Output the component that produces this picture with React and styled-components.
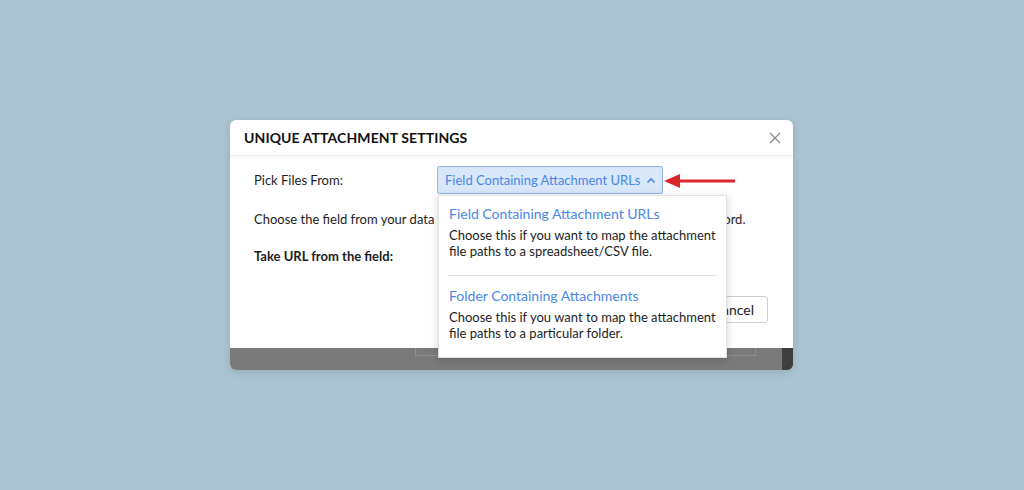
import styled, { createGlobalStyle } from "styled-components";

const Global = createGlobalStyle`
  html, body { margin: 0; padding: 0; }
  body {
    background: #a9c4d0;
    font-family: Lato, "Open Sans", sans-serif;
    color: #1d1d1d;
  }
`;

export default function App() {
  return (
    <>
      <Global />
      <Page>
        <Dialog>
          <Header>
            <Title>UNIQUE ATTACHMENT SETTINGS</Title>
            <Close>
              <svg width="12" height="12" viewBox="0 0 12 12">
                <path d="M1 1L11 11M11 1L1 11" stroke="#8a8a8a" strokeWidth="1.3" />
              </svg>
            </Close>
          </Header>
          <Body>
            <Row>
              <Label>Pick Files From:</Label>
              <SelectWrap>
                <Select>
                  Field Containing Attachment URLs
                  <svg width="10" height="7" viewBox="0 0 10 7">
                    <path d="M1.5 5.5L5 2L8.5 5.5" fill="none" stroke="#4a86e8" strokeWidth="1.6" />
                  </svg>
                </Select>
                <Arrow>
                  <svg width="72" height="16" viewBox="0 0 72 16">
                    <path d="M0 8L16 1V15Z" fill="#d8262c" />
                    <path d="M14 8H71" stroke="#d8262c" strokeWidth="3" />
                  </svg>
                </Arrow>
                <Menu>
                  <Option>
                    <OptionTitle>Field Containing Attachment URLs</OptionTitle>
                    <OptionText>
                      Choose this if you want to map the attachment file paths to a spreadsheet/CSV file.
                    </OptionText>
                  </Option>
                  <Divider />
                  <Option>
                    <OptionTitle>Folder Containing Attachments</OptionTitle>
                    <OptionText>
                      Choose this if you want to map the attachment file paths to a particular folder.
                    </OptionText>
                  </Option>
                </Menu>
              </SelectWrap>
            </Row>
            <Hint>Choose the field from your data source that holds the attachment URL for each record.</Hint>
            <StrongLabel>Take URL from the field:</StrongLabel>
            <Actions>
              <Button>Save</Button>
              <Button>Cancel</Button>
            </Actions>
          </Body>
          <Footer>
            <GhostInput />
            <DarkEdge />
          </Footer>
        </Dialog>
      </Page>
    </>
  );
}

const Page = styled.div`
  height: 490px;
  display: flex;
  align-items: center;
  justify-content: center;
  padding-right: 1px;
`;

const Dialog = styled.div`
  width: 563px;
  height: 250px;
  background: #fff;
  border-radius: 6px;
  display: flex;
  flex-direction: column;
  box-shadow: 0 2px 8px rgba(0, 0, 0, 0.12);
`;

const Header = styled.div`
  height: 35px;
  flex: none;
  display: flex;
  align-items: center;
  justify-content: space-between;
  padding: 0 12px 0 14px;
  border-bottom: 1px solid #ececec;
  box-shadow: 0 1px 3px rgba(0, 0, 0, 0.05);
`;

const Title = styled.div`
  font-size: 14px;
  font-weight: 700;
  color: #111;
  letter-spacing: 0.1px;
`;

const Close = styled.div`
  display: flex;
  width: 12px;
  height: 12px;
`;

const Body = styled.div`
  flex: 1;
  padding: 10px 25px 0 24px;
  font-size: 13px;
`;

const Row = styled.div`
  display: flex;
  align-items: center;
  height: 28px;
`;

const Label = styled.div`
  width: 183px;
  flex: none;
`;

const SelectWrap = styled.div`
  position: relative;
`;

const Select = styled.div`
  width: 226px;
  height: 28px;
  box-sizing: border-box;
  display: flex;
  align-items: center;
  justify-content: space-between;
  padding: 0 6px 0 7px;
  background: #d9e7fb;
  border: 1px solid #8eb4ef;
  border-radius: 2px;
  color: #4a86e8;
  font-size: 13px;
`;

const Arrow = styled.div`
  position: absolute;
  left: 227px;
  top: 7px;
  display: flex;
`;

const Menu = styled.div`
  position: absolute;
  left: 1px;
  top: 29px;
  width: 289px;
  box-sizing: border-box;
  background: #fff;
  border: 1px solid #e2e2e2;
  box-shadow: 0 2px 8px rgba(0, 0, 0, 0.18);
  z-index: 2;
`;

const Option = styled.div`
  padding: 9px 10px 16px 10px;
`;

const OptionTitle = styled.div`
  color: #4a86e8;
  font-size: 14px;
  line-height: 18px;
  margin-bottom: 4px;
`;

const OptionText = styled.div`
  font-size: 13px;
  line-height: 16px;
  color: #1d1d1d;
`;

const Divider = styled.div`
  height: 1px;
  background: #e4e4e4;
  margin: 0 9px 2px 9px;
`;

const Hint = styled.div`
  margin-top: 15px;
  line-height: 20px;
  white-space: nowrap;
`;

const StrongLabel = styled.div`
  margin-top: 17px;
  line-height: 20px;
  font-weight: 700;
`;

const Actions = styled.div`
  margin-top: 30px;
  display: flex;
  justify-content: flex-end;
  gap: 8px;
`;

const Button = styled.div`
  height: 27px;
  box-sizing: border-box;
  padding: 0 13px;
  display: flex;
  align-items: center;
  border: 1px solid #cfcfcf;
  border-radius: 3px;
  font-size: 14px;
  background: #fff;
`;

const Footer = styled.div`
  height: 22px;
  flex: none;
  background: #7a7a7a;
  border-radius: 0 0 6px 6px;
  display: flex;
  overflow: hidden;
`;

const GhostInput = styled.div`
  margin-left: 185px;
  width: 341px;
  height: 8px;
  box-sizing: border-box;
  border: 1px solid #909090;
  border-top: none;
`;

const DarkEdge = styled.div`
  margin-left: auto;
  width: 11px;
  background: #3e3e3e;
`;
